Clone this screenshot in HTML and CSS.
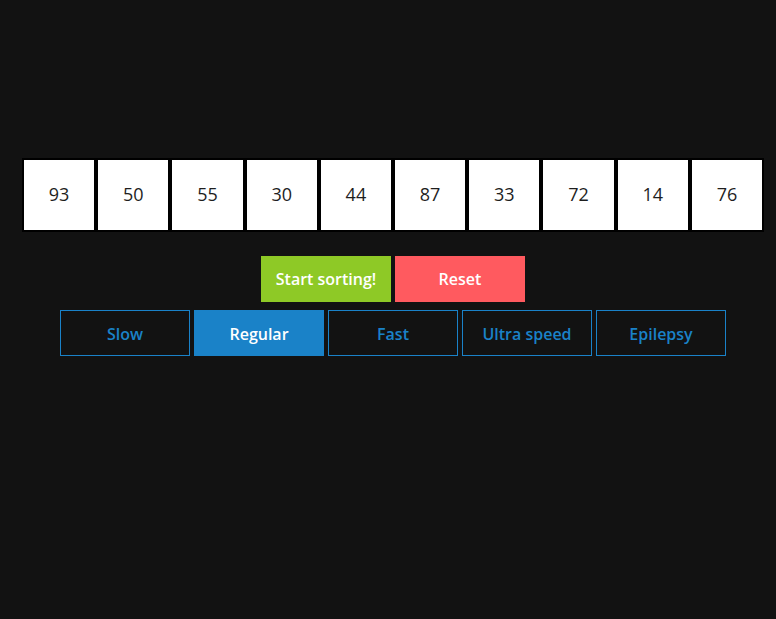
FILE: index.html
```html
<!DOCTYPE html>
<html>
<head>
<meta charset="utf-8">
<link rel="stylesheet" href="styles.css">
</head>
<body>
<div class="app">
  <div class="bars">
    <div class="cell">93</div>
    <div class="cell">50</div>
    <div class="cell">55</div>
    <div class="cell">30</div>
    <div class="cell">44</div>
    <div class="cell">87</div>
    <div class="cell">33</div>
    <div class="cell">72</div>
    <div class="cell">14</div>
    <div class="cell">76</div>
  </div>
  <div class="row actions">
    <button class="btn start">Start sorting!</button>
    <button class="btn reset">Reset</button>
  </div>
  <div class="row speeds">
    <button class="btn speed">Slow</button>
    <button class="btn speed active">Regular</button>
    <button class="btn speed">Fast</button>
    <button class="btn speed">Ultra speed</button>
    <button class="btn speed">Epilepsy</button>
  </div>
</div>
</body>
</html>
```

FILE: styles.css
```css
html, body {
  margin: 0;
  padding: 0;
  background: #121212;
  height: 100%;
}
body {
  font-family: "Open Sans", "Noto Sans", sans-serif;
}
.app {
  padding-left: 10px;
  padding-top: 158px;
  display: flex;
  flex-direction: column;
  align-items: center;
}
.bars {
  display: flex;
  width: 742px;
}
.cell {
  flex: 1;
  border: 2px solid #000;
  background: #fff;
  color: #1e1e1e;
  font-size: 18px;
  display: flex;
  align-items: center;
  justify-content: center;
  padding-bottom: 3px;
  box-sizing: border-box;
  height: 74px;
}
.row {
  display: flex;
  gap: 4px;
}
.actions {
  margin-top: 24px;
}
.speeds {
  margin-top: 8px;
}
.btn {
  width: 130px;
  height: 46px;
  border: none;
  font-family: "Open Sans", "Noto Sans", sans-serif;
  font-size: 16px;
  font-weight: 600;
  color: #fff;
  padding: 0;
  cursor: pointer;
}
.start { background: #8ec926; }
.reset { background: #ff5a5f; }
.speed {
  background: transparent;
  border: 1px solid #1a82c8;
  color: #1a82c8;
  padding-top: 2px;
}
.speed.active {
  background: #1a82c8;
  color: #fff;
}
```
